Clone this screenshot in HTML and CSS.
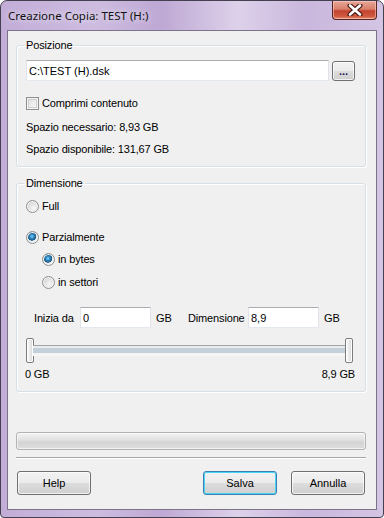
FILE: index.html
```html
<!DOCTYPE html>
<html lang="it">

<head>
    <meta charset="UTF-8">
    <meta name="viewport" content="width=device-width, initial-scale=1.0">
    <title>Creazione Copia</title>
    <link rel="stylesheet" href="styles.css">
</head>

<body>
    <div class="window">
        <div class="titlebar">
            <span class="title">Creazione Copia: TEST (H:)</span>
            <button class="close" type="button" aria-label="Chiudi">
                <svg width="16" height="12" viewBox="0 0 16 12">
                    <path d="M3 1.5 L13 10.5 M13 1.5 L3 10.5" stroke="#4a1a14" stroke-width="5" stroke-linecap="round" />
                    <path d="M3 1.5 L13 10.5 M13 1.5 L3 10.5" stroke="#ffffff" stroke-width="2.6" stroke-linecap="round" />
                </svg>
            </button>
        </div>

        <div class="client">
            <fieldset class="group group-pos">
                <legend>Posizione</legend>
                <div class="path-row">
                    <input type="text" class="field path" value="C:\TEST (H).dsk">
                    <button type="button" class="btn browse">...</button>
                </div>
                <label class="option check-row">
                    <input type="checkbox" class="check">
                    <span>Comprimi contenuto</span>
                </label>
                <div class="info first">Spazio necessario: 8,93 GB</div>
                <div class="info">Spazio disponibile: 131,67 GB</div>
            </fieldset>

            <fieldset class="group group-dim">
                <legend>Dimensione</legend>
                <label class="option opt-full">
                    <input type="radio" name="mode" class="radio">
                    <span>Full</span>
                </label>
                <label class="option opt-part">
                    <input type="radio" name="mode" class="radio" checked>
                    <span>Parzialmente</span>
                </label>
                <label class="option sub opt-bytes">
                    <input type="radio" name="unit" class="radio" checked>
                    <span>in bytes</span>
                </label>
                <label class="option sub opt-sect">
                    <input type="radio" name="unit" class="radio">
                    <span>in settori</span>
                </label>

                <div class="range-row">
                    <span class="lbl lbl-start">Inizia da</span>
                    <input type="text" class="field small" value="0">
                    <span class="lbl unit unit-first">GB</span>
                    <span class="lbl lbl-size">Dimensione</span>
                    <input type="text" class="field small" value="8,9">
                    <span class="lbl unit">GB</span>
                </div>

                <div class="slider">
                    <span class="thumb"></span>
                    <span class="track"></span>
                    <span class="thumb"></span>
                </div>
                <div class="scale">
                    <span>0 GB</span>
                    <span>8,9 GB</span>
                </div>
            </fieldset>

            <div class="progress"></div>
            <div class="separator"></div>

            <div class="buttons">
                <button type="button" class="btn action">Help</button>
                <button type="button" class="btn action default">Salva</button>
                <button type="button" class="btn action">Annulla</button>
            </div>
        </div>
    </div>
</body>

</html>
```

FILE: styles.css
```css
* {
    box-sizing: border-box;
}

body {
    margin: 0;
    font-family: "Liberation Sans", Arial, sans-serif;
    font-size: 11px;
    letter-spacing: -0.15px;
    color: #000;
    background: #ffffff;
}

.window {
    width: 384px;
    height: 518px;
    padding: 0 6px 7px 6px;
    border: 1px solid #45404f;
    border-radius: 7px 7px 4px 4px;
    background: linear-gradient(to right, #c2add7 0%, #cdbce0 25%, #bea8d4 42%, #ddd1ea 62%, #c9b7dd 80%, #d4c5e4 100%);
    overflow: hidden;
}

.titlebar {
    height: 29px;
    display: flex;
    justify-content: space-between;
    align-items: flex-start;
}

.title {
    margin: 7px 0 0 1px;
    font-family: "Noto Sans", sans-serif;
    font-size: 11.5px;
    letter-spacing: 0;
    line-height: 16px;
    color: #111;
    text-shadow: 0 0 6px rgba(255, 255, 255, 0.9);
}

.close {
    width: 45px;
    height: 19px;
    padding: 0;
    border: 1px solid #5a2420;
    border-top: none;
    border-radius: 0 0 4px 4px;
    background: linear-gradient(#e7a798 0%, #d9806b 45%, #c2432f 55%, #cf5a3f 85%, #e29275 100%);
    box-shadow: inset 0 0 0 1px rgba(255, 220, 210, 0.5);
    display: flex;
    align-items: center;
    justify-content: center;
}

.client {
    height: 480px;
    border: 1px solid #7d7388;
    background: #f0f0f0;
    padding-top: 6px;
}

.group {
    width: 350px;
    margin: 0 0 0 8px;
    border: 1px solid #d5dfe5;
    border-radius: 3px;
    box-shadow: inset 1px 1px 0 #ffffff, 1px 1px 0 #ffffff;
    padding: 7px 10px 9px 9px;
}

.group legend {
    padding: 0 2px;
    margin-left: -2px;
    line-height: 16px;
}

.group-dim {
    margin-top: 8px;
}

.path-row {
    display: flex;
    align-items: center;
    gap: 3px;
}

.field {
    height: 21px;
    padding: 0 2px;
    font: inherit;
    color: #000;
    background: #fff;
    border: 1px solid #e2e3ea;
    border-top-color: #abadb3;
    border-bottom-color: #e3e9ef;
    outline: none;
}

.path {
    width: 303px;
}

.btn {
    font: inherit;
    color: #000;
    border: 1px solid #707070;
    border-radius: 3px;
    background: linear-gradient(#f2f2f2 0%, #ebebeb 49%, #dddddd 50%, #cfcfcf 100%);
    box-shadow: inset 0 0 0 1px rgba(255, 255, 255, 0.7);
    padding: 0;
}

.browse {
    width: 23px;
    height: 20px;
    line-height: 14px;
    color: #1b1b5a;
    font-weight: bold;
}

.option {
    display: flex;
    align-items: center;
    gap: 3px;
    line-height: 16px;
    height: 16px;
    white-space: nowrap;
}

.check-row {
    margin-top: 14px;
}

.check,
.radio {
    appearance: none;
    width: 13px;
    height: 13px;
    margin: 0;
    border: 1px solid #8e8f8f;
    background: linear-gradient(135deg, #dcdcdc, #fbfbfb);
    box-shadow: inset 0 0 0 1px #f4f4f4, inset 0 0 0 2px #cfcfcf;
}

.radio {
    border-radius: 50%;
    box-shadow: inset 0 0 0 1px #f6f6f6;
    background: radial-gradient(circle at 60% 65%, #f8f8f8 0%, #d6d6d6 70%);
}

.radio:checked {
    background:
        radial-gradient(circle at 45% 40%, #8fd3f5 0px, #2f8bc9 2px, #19557f 4px, transparent 4.5px),
        radial-gradient(circle at 60% 65%, #f8f8f8 0%, #d6d6d6 70%);
}

.info {
    line-height: 16px;
    margin-top: 6px;
}

.info.first {
    margin-top: 8px;
}

.opt-part {
    margin-top: 15px;
}

.opt-bytes {
    margin-top: 6px;
}

.opt-sect {
    margin-top: 7px;
}

.sub {
    padding-left: 16px;
}

.range-row {
    display: flex;
    align-items: center;
    margin-top: 17px;
    padding-left: 8px;
    white-space: nowrap;
}

.lbl {
    line-height: 16px;
    flex-shrink: 0;
}

.lbl-start {
    width: 46px;
}

.small {
    width: 71px;
    flex-shrink: 0;
}

.unit {
    margin-left: 5px;
}

.unit-first {
    width: 32px;
}

.lbl-size {
    width: 60px;
}

.slider {
    display: flex;
    align-items: center;
    width: 327px;
    height: 25px;
    margin-top: 10px;
}

.thumb {
    width: 8px;
    height: 25px;
    border: 1px solid #7c7c7c;
    border-radius: 2px;
    background: linear-gradient(to right, #fdfdfd, #e6e6e6 60%, #d2d2d2);
    box-shadow: inset 0 0 0 1px #ffffff;
}

.track {
    flex: 1;
    height: 11px;
    margin: 0 -1px;
    border-top: 1px solid #a3a3a3;
    background: linear-gradient(#e9ecee 0, #e9ecee 2px, #c3d0da 2px, #c3d0da 7px, #f5f5f5 7px);
}

.scale {
    display: flex;
    justify-content: space-between;
    width: 330px;
    margin: 3px 0 0 -1px;
    line-height: 16px;
}

.progress {
    width: 350px;
    height: 18px;
    margin: 40px 0 0 8px;
    border: 1px solid #b2b2b2;
    border-radius: 3px;
    background: linear-gradient(#f3f3f3 0%, #e2e2e2 40%, #d3d3d3 60%, #dedede 100%);
    box-shadow: inset 0 0 0 1px rgba(255, 255, 255, 0.6);
}

.separator {
    width: 350px;
    height: 1px;
    margin: 7px 0 0 8px;
    background: #a6a6a6;
    box-shadow: 0 1px 0 #ffffff;
}

.buttons {
    display: flex;
    margin-top: 13px;
    padding: 0 11px 0 9px;
}

.action {
    width: 74px;
    height: 24px;
}

.default {
    margin-left: auto;
    margin-right: 14px;
    border-color: #3c7fb1;
    box-shadow: inset 0 0 0 1px #48d4f6;
}
```
